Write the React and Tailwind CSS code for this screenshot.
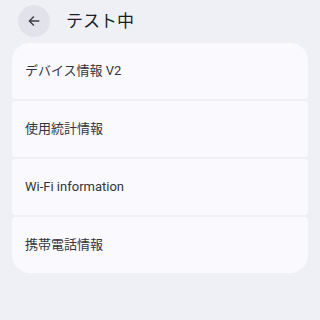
import React from 'react';

const rows = ['デバイス情報 V2', '使用統計情報', 'Wi-Fi information', '携帯電話情報'];

export default function App() {
    return (
        <div
            className="w-[320px] h-[320px] bg-[#eff0f6] overflow-hidden"
            style={{ fontFamily: 'Roboto, "Noto Sans CJK JP", sans-serif' }}
        >
            <div className="flex items-center h-[42px] pl-[18px]">
                <div className="w-[32px] h-[32px] rounded-full bg-[#e2e3ea] flex items-center justify-center">
                    <svg width="14" height="14" viewBox="0 0 24 24" fill="none" stroke="#3d3f46" strokeWidth="2.4" strokeLinecap="square">
                        <path d="M20 12H5M11 5l-7 7 7 7" />
                    </svg>
                </div>
                <h1 className="ml-[16px] text-[17px] text-[#1d1e24] leading-none mt-[1px]">テスト中</h1>
            </div>
            <div className="mx-[12px] mt-[1px] flex flex-col gap-[2px]">
                {rows.map((label, i) => (
                    <div
                        key={label}
                        className={`h-[56px] bg-[#f9f9fe] flex items-center px-[13px] text-[13px] text-[#34353b] ${
                            i === 0 ? 'rounded-t-[18px] rounded-b-[4px]' : i === rows.length - 1 ? 'rounded-b-[18px] rounded-t-[4px]' : 'rounded-[4px]'
                        }`}
                    >
                        {label}
                    </div>
                ))}
            </div>
        </div>
    );
}
